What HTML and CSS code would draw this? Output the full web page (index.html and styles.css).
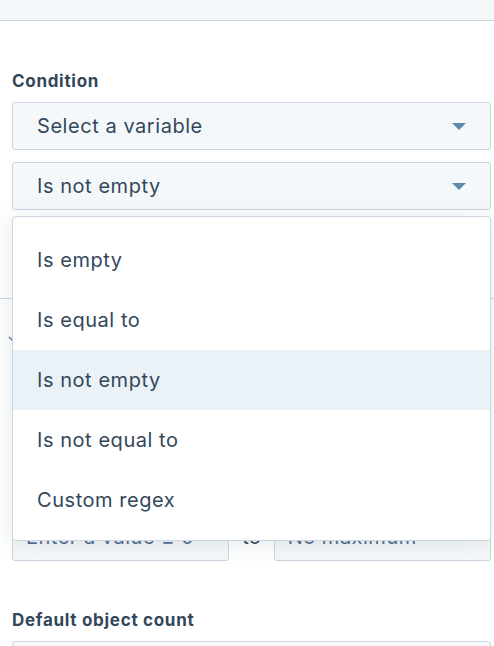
FILE: index.html
```html
<!DOCTYPE html>
<html lang="en">
<head>
<meta charset="utf-8">
<title>Condition</title>
<link rel="stylesheet" href="styles.css">
</head>
<body>
<div class="topbar"></div>
<div class="panel">
  <div class="field">
    <div class="label">Condition</div>
    <div class="select"><span>Select a variable</span><svg class="caret" width="14" height="7" viewBox="0 0 14 7"><path d="M0 0h14L7 7z"/></svg></div>
    <div class="select second"><span>Is not empty</span><svg class="caret" width="14" height="7" viewBox="0 0 14 7"><path d="M0 0h14L7 7z"/></svg></div>
  </div>
  <div class="divider"></div>
  <div class="hidden-row">
    <svg class="chev" width="6" height="8" viewBox="0 0 6 8"><path d="M1 1l4 4" stroke="#5e8bac" stroke-width="1.6" fill="none"/></svg>
    <div class="hidden-box"></div>
  </div>
  <div class="range">
    <div class="input placeholder">Enter a value ≥ 0</div>
    <span class="to">to</span>
    <div class="input placeholder">No maximum</div>
  </div>
  <div class="field lower">
    <div class="label">Default object count</div>
    <div class="input full"></div>
  </div>

  <ul class="menu">
    <li>Is empty</li>
    <li>Is equal to</li>
    <li class="active">Is not empty</li>
    <li>Is not equal to</li>
    <li>Custom regex</li>
  </ul>
</div>
</body>
</html>
```
FILE: styles.css
```css
* { box-sizing: border-box; }
html, body { height: 646px; }
body {
  margin: 0;
  background: #fff;
  font-family: Inter, "Noto Sans", sans-serif;
  color: #33475b;
  overflow: hidden;
}
.topbar {
  height: 21px;
  background: #f5f8fa;
  border-bottom: 1px solid #cbd6e2;
}
.panel {
  position: relative;
  padding: 0 3px 0 12px;
}
.field { padding-top: 50px; }
.label {
  font-size: 17px;
  font-weight: 700;
  line-height: 20px;
  height: 20px;
  margin-bottom: 11px;
  letter-spacing: 0.7px;
}
.select {
  display: flex;
  align-items: center;
  justify-content: space-between;
  height: 48px;
  padding: 0 24px 0 24px;
  background: #f5f8fa;
  border: 1px solid #cbd6e2;
  border-radius: 3px;
  font-size: 20px;
  letter-spacing: 0.55px;
}
.select.second { margin-top: 12px; }
.caret { fill: #5e8bac; }
.divider {
  margin: 88px -3px 0 -12px;
  border-top: 1px solid #cbd6e2;
}
.hidden-row {
  position: relative;
  height: 214px;
  padding-top: 24px;
}
.chev { position: absolute; left: -4px; top: 37px; }
.hidden-box {
  height: 48px;
  border: 1px solid #cbd6e2;
  border-radius: 3px;
  background: #f5f8fa;
}
.range {
  display: flex;
  align-items: center;
  gap: 13px;
}
.input {
  height: 48px;
  flex: 1;
  display: flex;
  align-items: center;
  padding: 0 13px;
  background: #f5f8fa;
  border: 1px solid #cbd6e2;
  border-radius: 3px;
  font-size: 20px;
  letter-spacing: 0.5px;
}
.placeholder { color: #516f90; }
.to { font-size: 20px; }
.field.lower { padding-top: 49px; }
.input.full { margin-top: 2px; }
.menu {
  position: absolute;
  left: 12px;
  top: 195px;
  width: 479px;
  height: 325px;
  margin: 0;
  padding: 13px 0 0;
  list-style: none;
  background: #fff;
  border: 1px solid #cbd6e2;
  border-radius: 4px;
  box-shadow: 0 2px 24px rgba(45, 62, 80, 0.12);
}
.menu li {
  height: 60px;
  display: flex;
  align-items: center;
  padding-left: 24px;
  font-size: 20px;
  letter-spacing: 0.55px;
}
.menu li.active { background: #eaf2f8; }
```
